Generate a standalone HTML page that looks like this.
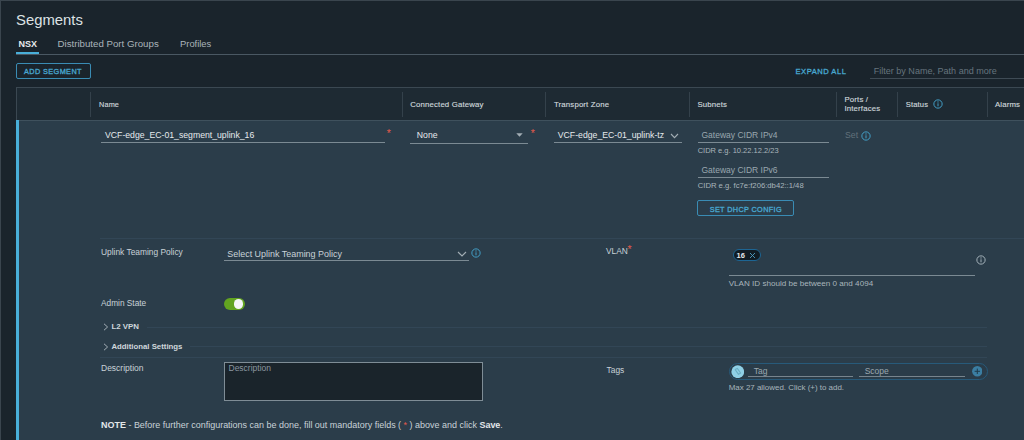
<!DOCTYPE html>
<html><head><meta charset="utf-8">
<style>
html,body{margin:0;padding:0;}
body{width:1024px;height:440px;overflow:hidden;position:relative;background:#1a242c;font-family:"Liberation Sans",sans-serif;}
.a{position:absolute;}
.t{position:absolute;white-space:nowrap;line-height:1;}
.b{font-weight:700;}
.h{letter-spacing:0.15px;-webkit-text-stroke:0.15px #cdd5da;color:#cdd5da;}
.btn{letter-spacing:0.4px;-webkit-text-stroke:0.3px #49a9d2;color:#49a9d2;}
.hl{position:absolute;height:1px;}
.vl{position:absolute;width:1px;}
</style></head><body>
<!-- outer 1px frame -->
<div class="hl" style="left:0;top:0;width:1024px;background:#3a454e"></div>
<div class="vl" style="left:0;top:0;height:440px;background:#3a454e"></div>

<!-- title -->
<div class="t" style="left:16px;top:13.45px;font-size:14.85px;color:#dde2e5">Segments</div>

<!-- tabs -->
<div class="t b" style="left:18.5px;top:39.5px;font-size:9px;color:#e8ebee">NSX</div>
<div class="t" style="left:57.5px;top:38.8px;font-size:9.7px;color:#aab4bb">Distributed Port Groups</div>
<div class="t" style="left:180px;top:39px;font-size:9.4px;color:#aab4bb">Profiles</div>
<div class="hl" style="left:16px;top:54px;width:1008px;background:#4a5863"></div>
<div class="a" style="left:16px;top:52px;width:23px;height:2px;background:#49afd9"></div>

<!-- add segment button -->
<div class="a" style="left:16px;top:63px;width:73px;height:14px;border:1px solid #3a8cb4;border-radius:2px"></div>
<div class="t btn" style="left:24px;top:67.6px;font-size:7.3px">ADD SEGMENT</div>

<!-- expand all + filter -->
<div class="t btn" style="left:795.5px;top:67.8px;font-size:7.6px;letter-spacing:0.5px">EXPAND ALL</div>
<div class="t" style="left:873.7px;top:66.9px;font-size:9.05px;color:#66747e">Filter by Name, Path and more</div>
<div class="hl" style="left:870px;top:78px;width:154px;background:#3f4b55"></div>

<!-- table -->
<div class="a" style="left:16px;top:87px;width:1008px;height:353px;background:#1e2a33;border-top:1px solid #3b4852;border-left:1px solid #3b4852;box-sizing:border-box"></div>
<div class="vl" style="left:90px;top:92px;height:25px;background:#34414b"></div>
<div class="vl" style="left:402px;top:92px;height:25px;background:#34414b"></div>
<div class="vl" style="left:545px;top:92px;height:25px;background:#34414b"></div>
<div class="vl" style="left:689px;top:92px;height:25px;background:#34414b"></div>
<div class="vl" style="left:836px;top:92px;height:25px;background:#34414b"></div>
<div class="vl" style="left:897px;top:92px;height:25px;background:#34414b"></div>
<div class="vl" style="left:987px;top:92px;height:25px;background:#34414b"></div>

<div class="t h" style="left:99px;top:100.7px;font-size:7.3px">Name</div>
<div class="t h" style="left:410.3px;top:100.7px;font-size:7.8px">Connected Gateway</div>
<div class="t h" style="left:554px;top:100.7px;font-size:7.8px">Transport Zone</div>
<div class="t h" style="left:697.5px;top:100.7px;font-size:7.8px">Subnets</div>
<div class="t h" style="left:844.5px;top:95.5px;font-size:7.8px">Ports /</div>
<div class="t h" style="left:844.5px;top:104.7px;font-size:7.8px">Interfaces</div>
<div class="t h" style="left:905.7px;top:100.7px;font-size:7.6px">Status</div>
<div class="t h" style="left:995px;top:100.7px;font-size:7.8px">Alarms</div>

<!-- expanded row -->
<div class="a" style="left:16px;top:120px;width:1008px;height:320px;background:#2b3d4a;border-top:1px solid #3f515d;box-sizing:border-box"></div>
<div class="a" style="left:16px;top:120px;width:3px;height:320px;background:#49afd9"></div>


<!-- name field -->
<div class="t" style="left:105px;top:131px;font-size:8.7px;color:#e6eaed">VCF-edge_EC-01_segment_uplink_16</div>
<div class="hl" style="left:101px;top:142px;width:284px;background:#7b8a93"></div>
<div class="t" style="left:386.8px;top:128.3px;font-size:10.5px;color:#e35a4c">*</div>

<!-- connected gateway -->
<div class="t" style="left:416.8px;top:131px;font-size:8.7px;color:#e6eaed">None</div>
<div class="hl" style="left:410px;top:143px;width:118px;background:#7b8a93"></div>
<svg class="a" style="left:516px;top:133px" width="7" height="4" viewBox="0 0 7 4"><path d="M0.3 0.3 L6.7 0.3 L3.5 3.7 Z" fill="#a3aeb5"/></svg>
<div class="t" style="left:530.8px;top:128.3px;font-size:10.5px;color:#e35a4c">*</div>

<!-- transport zone -->
<div class="t" style="left:557.8px;top:131px;font-size:8.7px;color:#e6eaed">VCF-edge_EC-01_uplink-tz</div>
<div class="hl" style="left:554px;top:142px;width:128px;background:#7b8a93"></div>
<svg class="a" style="left:670.3px;top:132.8px" width="9" height="6" viewBox="0 0 9 6"><path d="M1 1 L4.5 4.6 L8 1" fill="none" stroke="#a3aeb5" stroke-width="1.1"/></svg>

<!-- subnets -->
<div class="t" style="left:701.5px;top:131px;font-size:8.5px;color:#9aa7af">Gateway CIDR IPv4</div>
<div class="hl" style="left:698px;top:142px;width:131px;background:#7b8a93"></div>
<div class="t" style="left:697.7px;top:147px;font-size:7.5px;color:#a9b5bc">CIDR e.g. 10.22.12.2/23</div>
<div class="t" style="left:701.5px;top:165.6px;font-size:8.5px;color:#9aa7af">Gateway CIDR IPv6</div>
<div class="hl" style="left:698px;top:177px;width:131px;background:#7b8a93"></div>
<div class="t" style="left:697.7px;top:181.6px;font-size:7.7px;color:#a9b5bc">CIDR e.g. fc7e:f206:db42::1/48</div>
<div class="a" style="left:697px;top:200px;width:95px;height:14px;border:1px solid #3a8cb4;border-radius:2px"></div>
<div class="t btn" style="left:709.7px;top:205.5px;font-size:7.3px;letter-spacing:0.35px">SET DHCP CONFIG</div>

<!-- ports -->
<div class="t" style="left:845px;top:131px;font-size:8.7px;color:#62717b">Set</div>

<!-- separator -->
<div class="hl" style="left:100px;top:238px;width:924px;background:#324656"></div>

<!-- uplink teaming -->
<div class="t" style="left:101px;top:248px;font-size:8.4px;color:#c9d2d8">Uplink Teaming Policy</div>
<div class="t" style="left:227.3px;top:249.6px;font-size:8.95px;color:#c9d2d8">Select Uplink Teaming Policy</div>
<div class="hl" style="left:224px;top:260px;width:245px;background:#7b8a93"></div>
<svg class="a" style="left:456.5px;top:251px" width="10" height="6" viewBox="0 0 10 6"><path d="M1 1 L5 5 L9 1" fill="none" stroke="#a3aeb5" stroke-width="1.1"/></svg>

<!-- vlan -->
<div class="t" style="left:606px;top:246.8px;font-size:8.4px;color:#c9d2d8">VLAN</div>
<div class="t" style="left:627.6px;top:244.3px;font-size:10.5px;color:#e35a4c">*</div>
<div class="a" style="left:732.5px;top:249.2px;width:28px;height:12.2px;border-radius:6.5px;background:#111c23;border:1.4px solid #1d6593;box-sizing:border-box"></div>
<div class="t" style="left:736.6px;top:251.5px;font-size:7.5px;font-weight:700;color:#e6eaed">16</div>
<svg class="a" style="left:749.3px;top:252px" width="7" height="7" viewBox="0 0 7 7"><path d="M1 1 L6 6 M6 1 L1 6" stroke="#4f9ec3" stroke-width="0.9"/></svg>
<div class="hl" style="left:729px;top:275px;width:246px;background:#7b8a93"></div>
<div class="t" style="left:728.7px;top:279.5px;font-size:8.1px;color:#a9b5bc">VLAN ID should be between 0 and 4094</div>

<!-- admin state -->
<div class="t" style="left:101px;top:298.5px;font-size:8.3px;color:#c9d2d8">Admin State</div>
<div class="a" style="left:224px;top:298px;width:20.5px;height:11.5px;border-radius:6px;background:#62a420"></div>
<div class="a" style="left:233.8px;top:299px;width:9.5px;height:9.5px;border-radius:50%;background:#f4f6f7"></div>

<!-- l2 vpn -->
<svg class="a" style="left:103px;top:323.3px" width="6" height="8" viewBox="0 0 6 8"><path d="M1 0.8 L4.6 4 L1 7.2" fill="none" stroke="#a3aeb5" stroke-width="1"/></svg>
<div class="t b" style="left:111.4px;top:323.4px;font-size:7.9px;color:#d0d7dc">L2 VPN</div>
<div class="hl" style="left:147px;top:327px;width:840px;background:#324656"></div>
<svg class="a" style="left:103px;top:342.5px" width="6" height="8" viewBox="0 0 6 8"><path d="M1 0.8 L4.6 4 L1 7.2" fill="none" stroke="#a3aeb5" stroke-width="1"/></svg>
<div class="t b" style="left:111.4px;top:342.5px;font-size:7.8px;color:#d0d7dc">Additional Settings</div>
<div class="hl" style="left:190px;top:346px;width:797px;background:#324656"></div>
<div class="hl" style="left:100px;top:357px;width:887px;background:#324656"></div>

<!-- description -->
<div class="t" style="left:101px;top:364px;font-size:8.5px;color:#c9d2d8">Description</div>
<div class="a" style="left:223.5px;top:362px;width:259px;height:38.5px;background:#1a242b;border:1px solid #7f8d96;box-sizing:border-box"></div>
<div class="t" style="left:228.5px;top:364px;font-size:8.5px;color:#8a97a0">Description</div>

<!-- tags -->
<div class="t" style="left:606.6px;top:365.5px;font-size:8.4px;color:#c9d2d8">Tags</div>
<div class="a" style="left:729px;top:363px;width:258.5px;height:17px;border-radius:9px;background:#2a3c49;border:1px solid #275a7a;box-sizing:border-box"></div>
<svg class="a" style="left:730.5px;top:364.7px" width="13.5" height="13.5" viewBox="0 0 13.5 13.5"><circle cx="6.75" cy="6.75" r="6.4" fill="#8fd0e6"/><path d="M4.2 4.6 L6.3 3.4 L9.6 8.0 L7.5 9.4 Z" fill="none" stroke="#6aaec4" stroke-width="1.1" stroke-linejoin="round"/></svg>
<div class="t" style="left:753.8px;top:367px;font-size:8.5px;color:#9ba8b0">Tag</div>
<div class="hl" style="left:748px;top:376px;width:105px;background:#77848d"></div>
<div class="t" style="left:864.7px;top:367px;font-size:8.5px;color:#9ba8b0">Scope</div>
<div class="hl" style="left:859px;top:376px;width:106px;background:#77848d"></div>
<svg class="a" style="left:971.8px;top:366.3px" width="10.6" height="10.6" viewBox="0 0 10.6 10.6"><circle cx="5.3" cy="5.3" r="5.2" fill="#3b7ea2"/><path d="M5.3 2.6 V8 M2.6 5.3 H8" stroke="#1f3b4b" stroke-width="1"/></svg>
<div class="t" style="left:728.7px;top:383.5px;font-size:7.95px;color:#a9b5bc">Max 27 allowed. Click (+) to add.</div>

<!-- note -->
<div class="t" style="left:101px;top:421px;font-size:8.98px;color:#c9d2d8"><b style="color:#e3e7ea">NOTE</b> - Before further configurations can be done, fill out mandatory fields ( <span style="color:#e35a4c">*</span> ) above and click <b style="color:#e3e7ea">Save</b>.</div>

<!-- info icons -->
<svg class="a" style="left:932.6px;top:99.1px" width="10" height="10" viewBox="0 0 10 10"><circle cx="5" cy="5" r="4.15" fill="none" stroke="#43a3cc" stroke-width="0.95"/><circle cx="5" cy="2.95" r="0.62" fill="#43a3cc"/><path d="M5 4.3 V7.3" stroke="#43a3cc" stroke-width="0.95"/></svg>
<svg class="a" style="left:861.3px;top:130.9px" width="10" height="10" viewBox="0 0 10 10"><circle cx="5" cy="5" r="4.15" fill="none" stroke="#43a3cc" stroke-width="0.95"/><circle cx="5" cy="2.95" r="0.62" fill="#43a3cc"/><path d="M5 4.3 V7.3" stroke="#43a3cc" stroke-width="0.95"/></svg>
<svg class="a" style="left:471px;top:247.9px" width="10" height="10" viewBox="0 0 10 10"><circle cx="5" cy="5" r="4.15" fill="none" stroke="#43a3cc" stroke-width="0.95"/><circle cx="5" cy="2.95" r="0.62" fill="#43a3cc"/><path d="M5 4.3 V7.3" stroke="#43a3cc" stroke-width="0.95"/></svg>
<svg class="a" style="left:976.4px;top:255.4px" width="10" height="10" viewBox="0 0 10 10"><circle cx="5" cy="5" r="4.15" fill="none" stroke="#a9b6be" stroke-width="0.95"/><circle cx="5" cy="2.95" r="0.62" fill="#a9b6be"/><path d="M5 4.3 V7.3" stroke="#a9b6be" stroke-width="0.95"/></svg>
</body></html>
